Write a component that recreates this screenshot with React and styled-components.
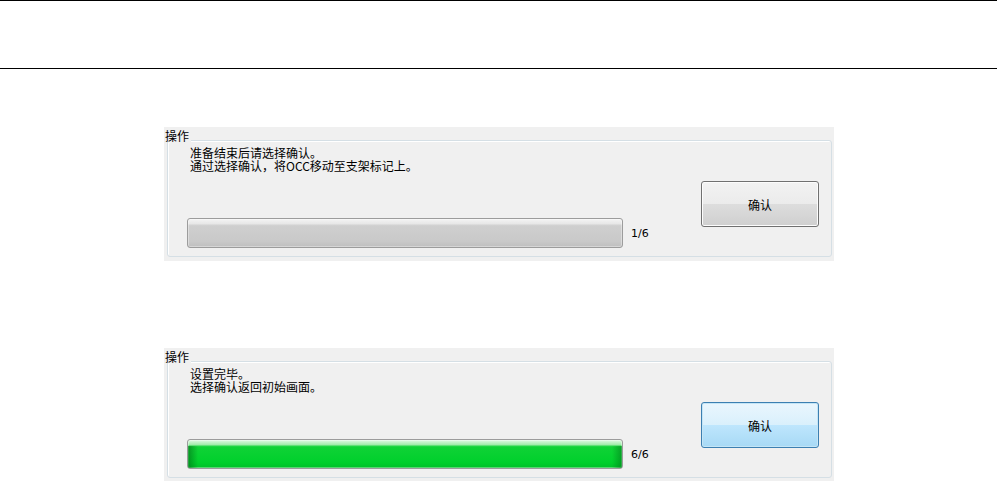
import React from "react";
import styled, { createGlobalStyle } from "styled-components";

const GlobalStyle = createGlobalStyle`
  body {
    margin: 0;
    background: #ffffff;
    font-family: "Noto Sans CJK SC", "Noto Sans", sans-serif;
    color: #000;
  }
`;

const Header = styled.div`
  height: 67px;
  border-top: 1px solid #000;
  border-bottom: 1px solid #000;
`;

const Content = styled.div`
  display: flex;
  flex-direction: column;
  gap: 87px;
  padding: 58px 0 0 164px;
`;

const Panel = styled.div`
  width: 670px;
  height: 134px;
  box-sizing: border-box;
  padding: 13px 2px 4px 3px;
  background: #f0f0f0;
`;

const Group = styled.div`
  position: relative;
  height: 117px;
  box-sizing: border-box;
  display: flex;
  border: 1px solid #d5dfe5;
  border-radius: 3px;
  box-shadow: inset 1px 1px 0 #ffffff;
  padding: 0 12px 8px 19px;
`;

const Legend = styled.span`
  position: absolute;
  top: -12px;
  left: -3px;
  padding-right: 2px;
  background: #f0f0f0;
  font-size: 12px;
  line-height: 13px;
`;

const Left = styled.div`
  flex: 1;
  display: flex;
  flex-direction: column;
`;

const Messages = styled.div`
  margin-top: 5px;
  padding-left: 3px;
  font-size: 12px;
  line-height: 13px;
`;

const BarRow = styled.div`
  margin-top: auto;
  display: flex;
  align-items: center;
  gap: 8px;
`;

const Bar = styled.div`
  width: 436px;
  height: 30px;
  box-sizing: border-box;
  border: 1px solid #9c9c9c;
  border-radius: 3px;
  box-shadow: inset 0 0 0 1px rgba(255, 255, 255, 0.35);
  background: ${(p) =>
    p.$done
      ? "linear-gradient(to bottom, #e2f9e5 0%, #a6ecae 16%, #10d236 24%, #00d02c 80%, #00c028 100%)"
      : "linear-gradient(to bottom, #f4f4f4 0%, #e8e8e8 16%, #cfcfcf 24%, #c9c9c9 80%, #bfbfbf 100%)"};
  position: relative;
  overflow: hidden;

  &::before,
  &::after {
    content: "";
    display: ${(p) => (p.$done ? "block" : "none")};
    position: absolute;
    top: 6px;
    bottom: 0;
    width: 10px;
  }
  &::before {
    left: 0;
    background: linear-gradient(to right, rgba(0, 100, 20, 0.55), rgba(0, 100, 20, 0));
  }
  &::after {
    right: 0;
    background: linear-gradient(to left, rgba(0, 100, 20, 0.45), rgba(0, 100, 20, 0));
  }
`;

const Count = styled.span`
  font-family: "DejaVu Sans", "Noto Sans", sans-serif;
  font-size: 11px;
  line-height: 13px;
`;

const Button = styled.button`
  margin-top: 40px;
  width: 118px;
  height: 46px;
  border-radius: 3px;
  font-family: "Noto Sans CJK SC", "Noto Sans", sans-serif;
  font-size: 12px;
  color: #000;
  cursor: pointer;
  border: 1px solid ${(p) => (p.$active ? "#3c7fb1" : "#707070")};
  box-shadow: inset 0 0 0 1px ${(p) => (p.$active ? "#c4e5f6" : "#fcfcfc")};
  background: ${(p) =>
    p.$active
      ? "linear-gradient(to bottom, #eaf6fd 0%, #d9f0fc 50%, #bee6fd 50%, #a7d9f5 100%)"
      : "linear-gradient(to bottom, #f2f2f2 0%, #ebebeb 50%, #dddddd 50%, #cfcfcf 100%)"};
`;

const steps = [
  {
    lines: ["准备结束后请选择确认。", "通过选择确认，将OCC移动至支架标记上。"],
    count: "1/6",
    done: false,
  },
  {
    lines: ["设置完毕。", "选择确认返回初始画面。"],
    count: "6/6",
    done: true,
  },
];

const App = () => (
  <>
    <GlobalStyle />
    <Header />
    <Content>
      {steps.map((s) => (
        <Panel key={s.count}>
          <Group>
            <Legend>操作</Legend>
            <Left>
              <Messages>
                {s.lines.map((l) => (
                  <div key={l}>{l}</div>
                ))}
              </Messages>
              <BarRow>
                <Bar $done={s.done} />
                <Count>{s.count}</Count>
              </BarRow>
            </Left>
            <Button $active={s.done}>确认</Button>
          </Group>
        </Panel>
      ))}
    </Content>
  </>
);

export default App;
